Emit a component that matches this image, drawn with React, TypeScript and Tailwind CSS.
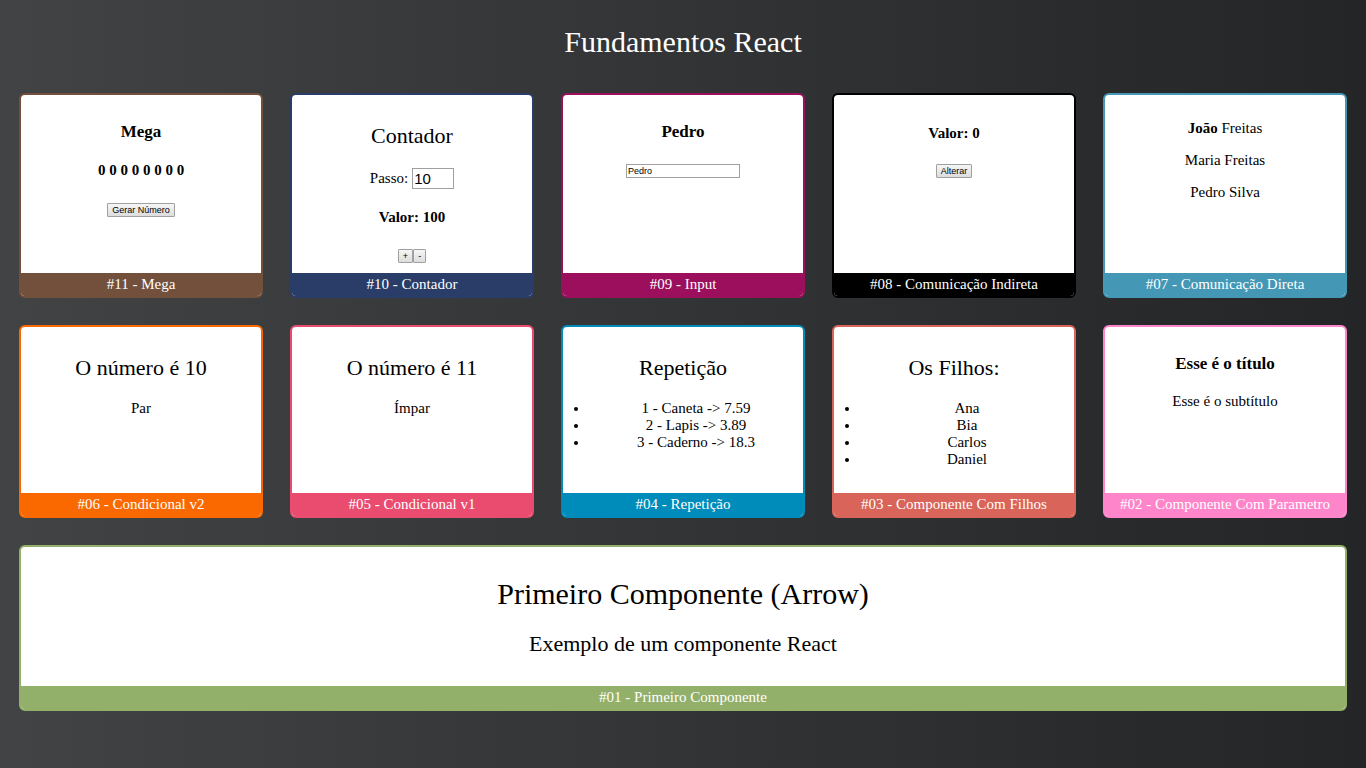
import React, { useState } from "react";

type CardProps = {
  title: string;
  border: string;
  footer: string;
  wide?: boolean;
  children: React.ReactNode;
};

function Card({ title, border, footer, wide, children }: CardProps) {
  return (
    <section
      className={`flex flex-col overflow-hidden rounded-[6px] border-2 bg-white text-center ${border} ${
        wide ? "col-span-full" : ""
      }`}
    >
      <div className="grow py-[10px]">{children}</div>
      <footer className={`py-[3px] text-white ${footer}`}>{title}</footer>
    </section>
  );
}

function Heading({ children }: { children: React.ReactNode }) {
  return <h2 className="mt-[18px] mb-5 text-[22px] leading-[25px]">{children}</h2>;
}

function SubHeading({ children }: { children: React.ReactNode }) {
  return <h3 className="mt-[17px] mb-[19px] text-[17px] leading-5 font-bold">{children}</h3>;
}

function Value({ children }: { children: React.ReactNode }) {
  return <h4 className="my-5 font-bold">{children}</h4>;
}

function SmallButton({ onClick, children }: { onClick: () => void; children: React.ReactNode }) {
  return (
    <button
      type="button"
      onClick={onClick}
      className="rounded-[1px] border border-[#a0a0a0] bg-linear-to-b from-[#f6f6f6] to-[#dddddd] px-1 font-['Liberation_Sans',sans-serif] text-[9px] leading-3 text-black"
    >
      {children}
    </button>
  );
}

function Mega() {
  const [numbers, setNumbers] = useState<number[]>(Array(8).fill(0));
  const draw = () => setNumbers(Array.from({ length: 8 }, () => Math.floor(Math.random() * 60) + 1));
  return (
    <>
      <SubHeading>Mega</SubHeading>
      <Value>{numbers.join(" ")}</Value>
      <div className="mt-6 flex justify-center">
        <SmallButton onClick={draw}>Gerar Número</SmallButton>
      </div>
    </>
  );
}

function Counter() {
  const [step, setStep] = useState(10);
  const [value, setValue] = useState(100);
  return (
    <>
      <Heading>Contador</Heading>
      <div className="flex items-center justify-center gap-1">
        <label htmlFor="step">Passo:</label>
        <input
          id="step"
          type="number"
          value={step}
          onChange={(e) => setStep(Number(e.target.value))}
          className="h-[21px] w-[42px] border border-[#a0a0a0] px-px font-['Liberation_Sans',sans-serif] text-[15px] [appearance:textfield]"
        />
      </div>
      <Value>Valor: {value}</Value>
      <div className="mt-[23px] flex justify-center">
        <SmallButton onClick={() => setValue(value + step)}>+</SmallButton>
        <SmallButton onClick={() => setValue(value - step)}>-</SmallButton>
      </div>
    </>
  );
}

function NameInput() {
  const [name, setName] = useState("Pedro");
  return (
    <>
      <SubHeading>{name}</SubHeading>
      <input
        aria-label="Nome"
        value={name}
        onChange={(e) => setName(e.target.value)}
        className="mx-auto mt-[22px] block h-[14px] w-[114px] border border-[#a0a0a0] px-px font-['Liberation_Sans',sans-serif] text-[9px]"
      />
    </>
  );
}

function Indirect() {
  const [value, setValue] = useState(0);
  return (
    <>
      <Value>Valor: {value}</Value>
      <div className="mt-[22px] flex justify-center">
        <SmallButton onClick={() => setValue(Math.floor(Math.random() * 100))}>Alterar</SmallButton>
      </div>
    </>
  );
}

function BulletList({ items }: { items: string[] }) {
  return (
    <ul className="mb-[15px] list-disc pl-[26px]">
      {items.map((item) => (
        <li key={item}>{item}</li>
      ))}
    </ul>
  );
}

export default function App() {
  return (
    <main className="min-h-screen bg-linear-to-r from-[#414345] to-[#232526] px-[19px] pt-[25px] pb-[57px] font-['Liberation_Serif',serif] text-[15px] leading-[17px] text-black">
      <h1 className="mb-[34px] text-center text-[30px] leading-[34px] text-white">Fundamentos React</h1>
      <div className="grid grid-cols-5 gap-[27px]">
        <Card title="#11 - Mega" border="border-[#73503c]" footer="bg-[#73503c]">
          <Mega />
        </Card>
        <Card title="#10 - Contador" border="border-[#2a3d69]" footer="bg-[#2a3d69]">
          <Counter />
        </Card>
        <Card title="#09 - Input" border="border-[#9b0f5c]" footer="bg-[#9b0f5c]">
          <NameInput />
        </Card>
        <Card title="#08 - Comunicação Indireta" border="border-black" footer="bg-black">
          <Indirect />
        </Card>
        <Card title="#07 - Comunicação Direta" border="border-[#4498b5]" footer="bg-[#4498b5]">
          <p className="my-[15px]">
            <strong>João</strong> Freitas
          </p>
          <p className="my-[15px]">Maria Freitas</p>
          <p className="my-[15px]">Pedro Silva</p>
        </Card>
        <Card title="#06 - Condicional v2" border="border-[#fa6900]" footer="bg-[#fa6900]">
          <Heading>O número é 10</Heading>
          <p>Par</p>
        </Card>
        <Card title="#05 - Condicional v1" border="border-[#e94c6f]" footer="bg-[#e94c6f]">
          <Heading>O número é 11</Heading>
          <p>Ímpar</p>
        </Card>
        <Card title="#04 - Repetição" border="border-[#008cba]" footer="bg-[#008cba]">
          <Heading>Repetição</Heading>
          <BulletList items={["1 - Caneta -> 7.59", "2 - Lapis -> 3.89", "3 - Caderno -> 18.3"]} />
        </Card>
        <Card title="#03 - Componente Com Filhos" border="border-[#d96459]" footer="bg-[#d96459]">
          <Heading>Os Filhos:</Heading>
          <BulletList items={["Ana", "Bia", "Carlos", "Daniel"]} />
        </Card>
        <Card title="#02 - Componente Com Parametro" border="border-[#ff85cb]" footer="bg-[#ff85cb]">
          <SubHeading>Esse é o título</SubHeading>
          <p>Esse é o subtítulo</p>
        </Card>
        <Card title="#01 - Primeiro Componente" border="border-[#93b06b]" footer="bg-[#93b06b]" wide>
          <h2 className="my-5 text-[30px] leading-[34px]">Primeiro Componente (Arrow)</h2>
          <h3 className="my-5 text-[22px] leading-[25px]">Exemplo de um componente React</h3>
        </Card>
      </div>
    </main>
  );
}
